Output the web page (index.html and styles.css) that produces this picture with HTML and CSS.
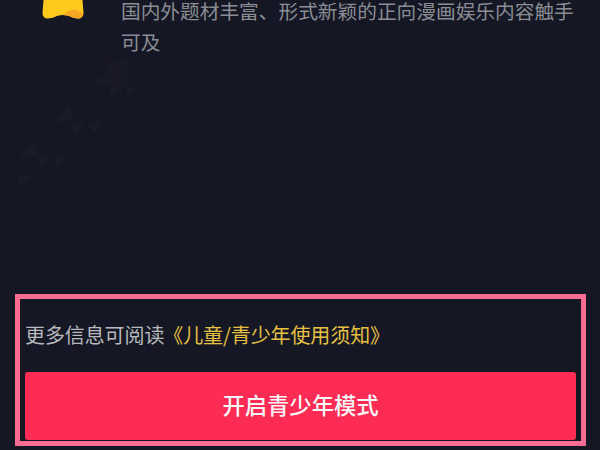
FILE: index.html
```html
<!DOCTYPE html>
<html lang="zh-CN">
<head>
<meta charset="utf-8">
<title>青少年模式</title>
<link rel="stylesheet" href="styles.css">
</head>
<body>
<main class="page">
  <svg class="ghost" viewBox="0 0 200 150" aria-hidden="true">
    <rect x="107" y="0" width="13" height="27" fill="#191926"/>
    <rect x="120" y="0" width="9" height="27" fill="#161b27"/>
    <g fill="#181c28">
      <path d="M90 25l17-12v12z"/>
      <path d="M108 28l14 0-9 10z"/>
      <path d="M125 28l12 0-8 10z"/>
      <path d="M55 62l16-17 1 16z"/>
      <path d="M72 63l13-1-9 13z"/>
      <path d="M88 63l14-1-8 12z"/>
      <path d="M18 96l19-16v16z"/>
      <path d="M37 98l13-1-9 13z"/>
      <path d="M53 98l14-1-9 12z"/>
      <path d="M17 116l17-2-14 14z"/>
    </g>
  </svg>
  <section class="feature">
    <div class="feature-icon">
      <svg viewBox="0 0 42 20" width="42" height="20" aria-hidden="true">
        <path d="M1.500 0h39l1 13c0 3.500-2 5.500-5.500 5.500-5 0-9-3.500-15-3.500S11 18.500 6 18.500c-3.500 0-5.500-2-5.500-5.500z" fill="#fdc91d"/>
        <path d="M19 15.200c4-1 9-5.700 12-5.700 3 0 7 2 9.500 4.500-.8 2.800-2.500 4.500-4.500 4.500-5 0-9-3.500-15-3.500-.7 0-1.300 0-2 .2z" fill="#f5a623"/>
      </svg>
    </div>
    <p class="feature-text">
      <span class="feature-line">国内外题材丰富、形式新颖的正向漫画娱乐内容触手</span>
      <span class="feature-line">可及</span>
    </p>
  </section>
  <section class="footer-frame">
    <p class="notice">更多信息可阅读<a class="notice-link">《儿童/青少年使用须知》</a></p>
    <button class="primary" type="button">开启青少年模式</button>
  </section>
</main>
</body>
</html>
```
FILE: styles.css
```css
* { box-sizing: border-box; }
html, body { margin: 0; padding: 0; }
body {
  background: #151824;
  font-family: "Noto Sans CJK SC", "Noto Sans", sans-serif;
}
.page {
  position: relative;
  width: 600px;
  height: 450px;
  overflow: hidden;
  display: flex;
  flex-direction: column;
  background: #151824;
}
.ghost {
  position: absolute;
  left: 0;
  top: 60px;
  width: 200px;
  height: 150px;
}
.feature {
  position: relative;
  display: flex;
  align-items: flex-start;
  padding-left: 42px;
  height: 294px;
  flex: none;
}
.feature-icon {
  width: 79px;
  flex: none;
  line-height: 0;
}
.feature-text {
  margin: 0;
  display: flex;
  flex-direction: column;
  gap: 9px;
  font-size: 19.7px;
  color: #8a8d94;
}
.feature-line {
  line-height: 22px;
  white-space: nowrap;
}
.footer-frame {
  position: relative;
  flex: none;
  width: 571px;
  height: 152px;
  margin-left: 15px;
  border: 5px solid #fb6c93;
  padding: 0 5px 1px 5px;
  display: flex;
  flex-direction: column;
  justify-content: flex-end;
  background: #151824;
}
.notice {
  margin: 0 0 21px;
  font-size: 20px;
  line-height: 32px;
  letter-spacing: -0.1px;
  color: #b8babf;
  white-space: nowrap;
}
.notice-link {
  color: #e6c043;
  margin-left: -1px;
}
.primary {
  display: block;
  width: 551px;
  height: 68px;
  border: 0;
  border-radius: 3px;
  background: #fe2c55;
  color: #f7f7f8;
  font-family: inherit;
  font-size: 22.3px;
  font-weight: 500;
  line-height: 28px;
  padding: 0 0 4px;
}
```
